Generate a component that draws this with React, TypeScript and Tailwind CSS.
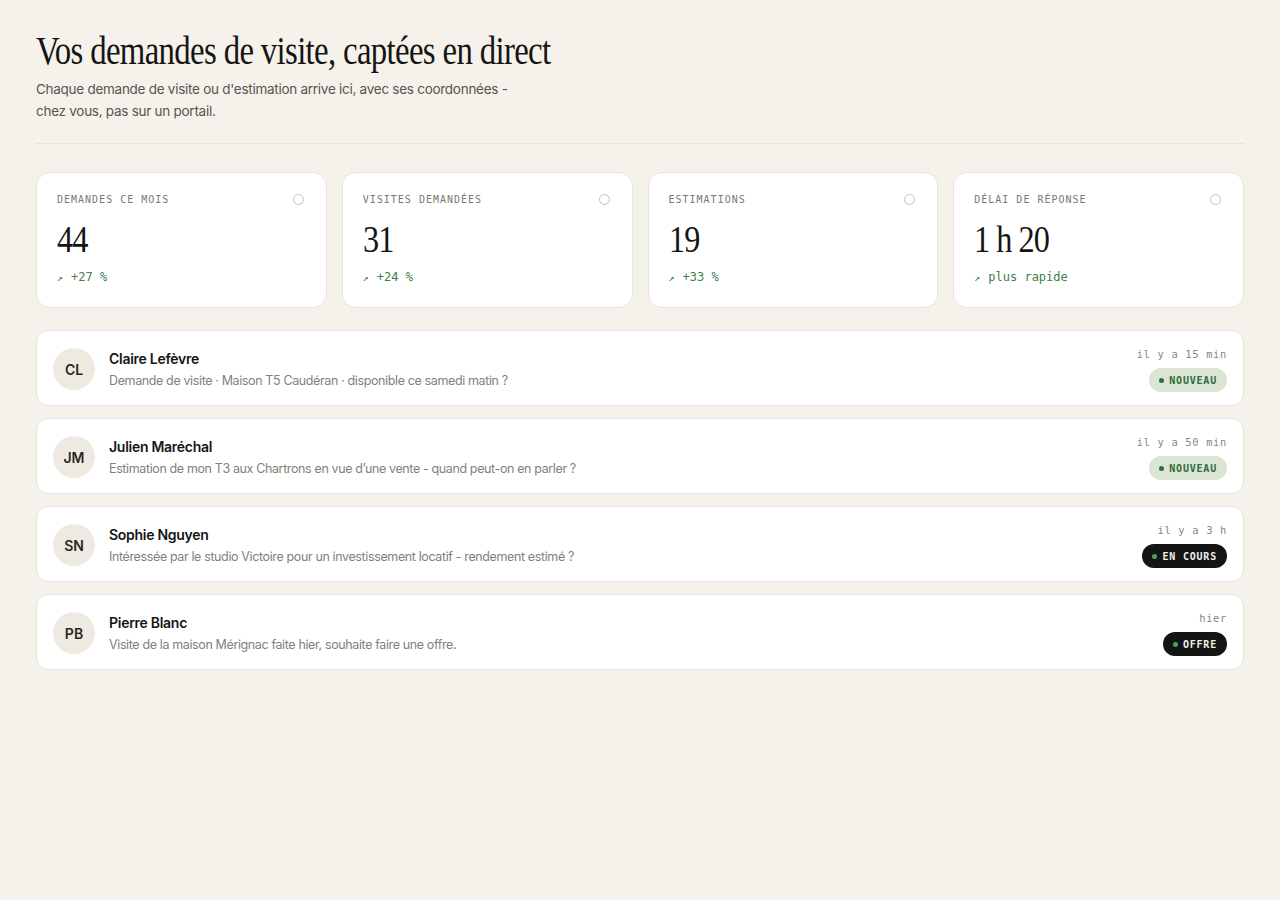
import React from 'react'

type Stat = {
  label: string
  value: string
  trend: string
}

type Lead = {
  initials: string
  name: string
  message: string
  time: string
  status: string
  dark: boolean
}

const stats: Stat[] = [
  {label: 'Demandes ce mois', value: '44', trend: '+27 %'},
  {label: 'Visites demandées', value: '31', trend: '+24 %'},
  {label: 'Estimations', value: '19', trend: '+33 %'},
  {label: 'Délai de réponse', value: '1 h 20', trend: 'plus rapide'},
]

const leads: Lead[] = [
  {
    initials: 'CL',
    name: 'Claire Lefèvre',
    message: 'Demande de visite · Maison T5 Caudéran · disponible ce samedi matin ?',
    time: 'il y a 15 min',
    status: 'Nouveau',
    dark: false,
  },
  {
    initials: 'JM',
    name: 'Julien Maréchal',
    message: 'Estimation de mon T3 aux Chartrons en vue d’une vente - quand peut-on en parler ?',
    time: 'il y a 50 min',
    status: 'Nouveau',
    dark: false,
  },
  {
    initials: 'SN',
    name: 'Sophie Nguyen',
    message: 'Intéressée par le studio Victoire pour un investissement locatif - rendement estimé ?',
    time: 'il y a 3 h',
    status: 'En cours',
    dark: true,
  },
  {
    initials: 'PB',
    name: 'Pierre Blanc',
    message: 'Visite de la maison Mérignac faite hier, souhaite faire une offre.',
    time: 'hier',
    status: 'Offre',
    dark: true,
  },
]

const serif = "font-['Liberation_Serif',serif]"
const mono = "font-['DejaVu_Sans_Mono',monospace]"

function StatCard({stat}: {stat: Stat}) {
  return (
    <div className="rounded-[14px] border border-[#e9e5dd] bg-white px-5 pt-[19px] pb-[21px]">
      <div className="flex items-center justify-between">
        <span className={`${mono} text-[10px] uppercase tracking-[0.1em] text-[#7a7772]`}>
          {stat.label}
        </span>
        <span className="mr-[2px] h-[11px] w-[11px] rounded-full border border-[#c4c1bb]" />
      </div>
      <div
        className={`${serif} mt-[10px] origin-left scale-x-[0.85] text-[38px] leading-[44px] tracking-[-0.03em] whitespace-nowrap text-[#161514]`}
      >
        {stat.value}
      </div>
      <div className={`${mono} mt-[7px] text-[12px] text-[#3f7d4c]`}>
        <span className="mr-2 text-[10px]">↗</span>
        {stat.trend}
      </div>
    </div>
  )
}

function LeadRow({lead}: {lead: Lead}) {
  return (
    <div className="flex items-center rounded-[12px] border border-[#e9e5dd] bg-white px-4 pt-[15px] pb-[13px]">
      <div className="flex h-[42px] w-[42px] shrink-0 items-center justify-center rounded-full bg-[#efeae1] text-[14px] font-semibold text-[#2a2826]">
        {lead.initials}
      </div>
      <div className="mt-[2px] ml-[14px] min-w-0 flex-1">
        <div className="text-[14px] font-semibold leading-[20px] tracking-[-0.02em] text-[#161514]">
          {lead.name}
        </div>
        <div className="mt-[2px] text-[12.5px] leading-[20px] tracking-[-0.03em] text-[#827f7a]">
          {lead.message}
        </div>
      </div>
      <div className="flex flex-col items-end gap-[6px]">
        <span className={`${mono} text-[10.5px] leading-[16px] tracking-[0.06em] text-[#8a8782]`}>
          {lead.time}
        </span>
        <span
          className={`${mono} flex h-[24px] items-center gap-[5px] rounded-full px-[10px] text-[10px] font-bold uppercase tracking-[0.08em] ${
            lead.dark ? 'bg-[#141414] text-[#f1efe9]' : 'bg-[#dce5d3] text-[#2f6c3b]'
          }`}
        >
          <span
            className={`h-[5px] w-[5px] rounded-full ${lead.dark ? 'bg-[#4aa35c]' : 'bg-[#2f6c3b]'}`}
          />
          {lead.status}
        </span>
      </div>
    </div>
  )
}

export default function App() {
  return (
    <div className="min-h-[900px] bg-[#f5f2eb] px-9 pt-[28px] pb-10 font-['Inter',sans-serif]">
      <header className="border-b border-[#e8e4dc] pb-[21px]">
        <h1
          className={`${serif} origin-left scale-x-[0.82] text-[40px] leading-[46px] tracking-[-0.02em] whitespace-nowrap text-[#161514]`}
        >
          Vos demandes de visite, captées en direct
        </h1>
        <p className="mt-[4px] text-[13.5px] leading-[22px] tracking-[-0.02em] text-[#57544f]">
          Chaque demande de visite ou d'estimation arrive ici, avec ses coordonnées -
          <br />
          chez vous, pas sur un portail.
        </p>
      </header>

      <section className="mt-[28px] grid grid-cols-4 gap-[15px]">
        {stats.map((stat) => (
          <StatCard key={stat.label} stat={stat} />
        ))}
      </section>

      <section className="mt-[22px] flex flex-col gap-[12px]">
        {leads.map((lead) => (
          <LeadRow key={lead.initials} lead={lead} />
        ))}
      </section>
    </div>
  )
}
